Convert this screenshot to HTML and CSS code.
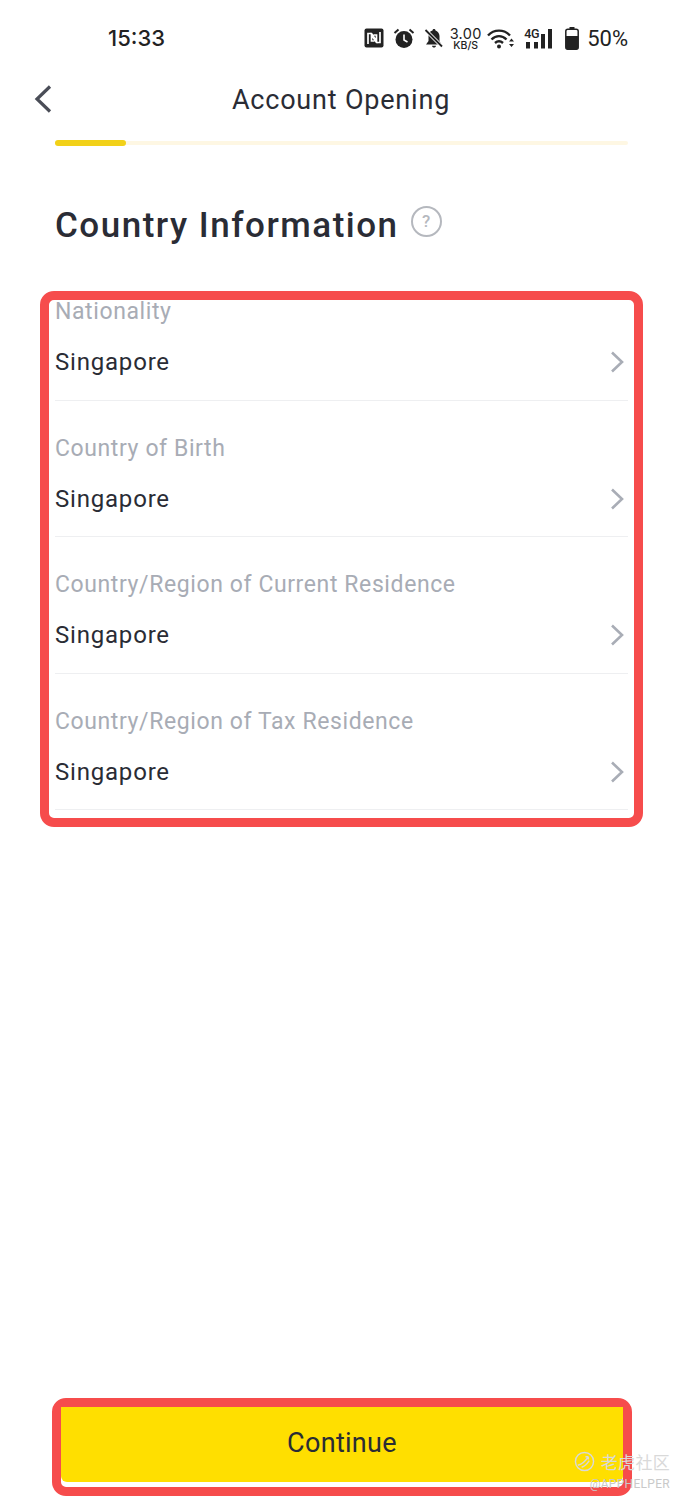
FILE: index.html
```html
<!DOCTYPE html>
<html lang="en">
<head>
<meta charset="utf-8">
<title>Account Opening</title>
<link rel="stylesheet" href="styles.css">
</head>
<body>
<div class="page">
  <header class="status">
    <span class="time">15:33</span>
    <div class="status-icons">
      <svg class="ic-nfc" width="20" height="20" viewBox="0 0 20 20"><rect x="0.500" y="0.500" width="19" height="19" rx="2" fill="#222"/><path d="M4 16V5.500h3.500l5 7.500V7H9.500M16 4v10.500h-3.500L7.500 7v6h3" fill="none" stroke="#fff" stroke-width="1.700"/></svg>
      <svg class="ic-alarm" width="22" height="22" viewBox="0 0 22 22"><circle cx="11" cy="12.500" r="8.500" fill="#222"/><path d="M11 7.500v5.500l3.500 2" fill="none" stroke="#fff" stroke-width="1.600"/><path d="M1.500 6l4-3.500M20.500 6l-4-3.500" stroke="#222" stroke-width="2" fill="none"/></svg>
      <svg class="ic-bell" width="20" height="20" viewBox="0 0 20 20"><path d="M10 1c-1 0-1.500.7-1.500 1.500C5.800 3.300 4.500 5.500 4.500 8v5L2 16.500h15.500L15.500 13V8c0-2.500-2-4.700-4-5.500C11.500 1.700 11 1 10 1zM8 17.700h4c0 1-1 1.800-2 1.800s-2-.8-2-1.800z" fill="#222"/><path d="M1.500 2L18 18.500" stroke="#fff" stroke-width="3.500"/><path d="M1.500 2L18 18.500" stroke="#222" stroke-width="1.800"/></svg>
      <div class="speed"><span class="speed-num">3.00</span><span class="speed-unit">KB/S</span></div>
      <svg class="ic-wifi" width="28" height="21" viewBox="0 0 28 21"><path d="M1 7.500C7 1 17 1 23 7.500M4.500 11.500C9 7 15 7 19.500 11.500M8 15C10.500 12.700 13.500 12.700 16 15" fill="none" stroke="#222" stroke-width="2.400"/><circle cx="12" cy="18.500" r="2" fill="#222"/><path d="M22 13.500l2.500-3 2.500 3zM22 16l2.500 3 2.500-3z" fill="#222"/></svg>
      <div class="net">
        <span class="net-label">4G</span>
        <svg width="28" height="21" viewBox="0 0 28 21"><path d="M2 14h4v6.500H2zM10 14h4v6.500h-4zM17 6h4v14.500h-4zM24 1h4v19.500h-4z" fill="#222"/></svg>
      </div>
      <svg class="ic-batt" width="14" height="23" viewBox="0 0 14 23"><path d="M4.500 0h5v2h-5z" fill="#222"/><rect x="0.800" y="2.200" width="12.400" height="20" rx="2" fill="#fff" stroke="#222" stroke-width="1.500"/><path d="M1 9h12v11.500a2 2 0 0 1-2 2H3a2 2 0 0 1-2-2z" fill="#222"/></svg>
      <span class="pct">50%</span>
    </div>
  </header>

  <nav class="nav">
    <svg class="back" width="20" height="30" viewBox="0 0 20 30"><path d="M17 2.500L4 15l13 12.500" fill="none" stroke="#4a4d57" stroke-width="3.200"/></svg>
    <h1 class="nav-title">Account Opening</h1>
  </nav>

  <div class="progress"><div class="progress-fill"></div></div>

  <div class="heading">
    <h2 class="heading-text">Country Information</h2>
    <span class="help">?</span>
  </div>

  <section class="form">
    <div class="row">
      <div class="label">Nationality</div>
      <div class="value-line"><span class="value">Singapore</span><svg class="chev" width="14" height="22" viewBox="0 0 14 22"><path d="M2 1.500L12 11 2 20.500" fill="none" stroke="#a9adb6" stroke-width="2.600"/></svg></div>
    </div>
    <div class="row">
      <div class="label">Country of Birth</div>
      <div class="value-line"><span class="value">Singapore</span><svg class="chev" width="14" height="22" viewBox="0 0 14 22"><path d="M2 1.500L12 11 2 20.500" fill="none" stroke="#a9adb6" stroke-width="2.600"/></svg></div>
    </div>
    <div class="row">
      <div class="label">Country/Region of Current Residence</div>
      <div class="value-line"><span class="value">Singapore</span><svg class="chev" width="14" height="22" viewBox="0 0 14 22"><path d="M2 1.500L12 11 2 20.500" fill="none" stroke="#a9adb6" stroke-width="2.600"/></svg></div>
    </div>
    <div class="row">
      <div class="label">Country/Region of Tax Residence</div>
      <div class="value-line"><span class="value">Singapore</span><svg class="chev" width="14" height="22" viewBox="0 0 14 22"><path d="M2 1.500L12 11 2 20.500" fill="none" stroke="#a9adb6" stroke-width="2.600"/></svg></div>
    </div>
  </section>

  <div class="cta-frame"><button class="cta">Continue</button></div>

  <div class="watermark">
    <div class="wm-top">
      <svg width="21" height="21" viewBox="0 0 22 22"><circle cx="11" cy="11" r="9.500" fill="none" stroke="#d9d9d9" stroke-width="1.500"/><path d="M4 15c4-1 8-4 11-9M15 6h-3M15 6v3M8 17c3-1 6-4 8-7" fill="none" stroke="#d9d9d9" stroke-width="1.500"/></svg>
      <span class="wm-cn">老虎社区</span>
    </div>
    <div class="wm-en">@APPHELPER</div>
  </div>
</div>
</body>
</html>
```

FILE: styles.css
```css
* { box-sizing: border-box; }
html, body { margin: 0; padding: 0; background: #fff; }
.page {
  position: relative;
  width: 682px;
  height: 1500px;
  display: flex;
  flex-direction: column;
  font-family: Roboto, "Noto Sans", sans-serif;
  color: #2a2c35;
  overflow: hidden;
}
.status {
  height: 76px;
  display: flex;
  align-items: center;
  justify-content: space-between;
  padding: 0 54px 0 108px;
  color: #222;
}
.time { font-size: 22px; font-family: "Inter", Roboto, sans-serif; font-weight: 500; letter-spacing: 0; }
.status-icons { display: flex; align-items: center; }
.ic-nfc { margin-right: 9px; }
.ic-alarm { margin-right: 9px; }
.ic-bell { margin-right: 5px; }
.speed {
  width: 33px;
  margin-right: 5px;
  display: flex;
  flex-direction: column;
  align-items: center;
  font-family: Inter, Roboto, sans-serif;
  line-height: 1;
}
.speed-num { font-size: 14.500px; letter-spacing: 0.3px; height: 13px; line-height: 13px; }
.speed-unit { font-size: 10.500px; font-weight: 500; height: 10px; line-height: 11px; }
.ic-wifi { margin-right: 9px; }
.net { position: relative; width: 28px; height: 21px; margin-right: 13px; }
.net svg { display: block; }
.net-label {
  position: absolute;
  left: 0;
  top: -1px;
  font-size: 12.500px;
  font-weight: 500;
  letter-spacing: -0.3px;
  line-height: 13px;
}
.ic-batt { margin-right: 8px; }
.pct { font-size: 22px; font-family: Roboto, sans-serif; font-weight: 400; letter-spacing: 0; }

.nav {
  position: relative;
  height: 48px;
  display: flex;
  align-items: center;
  justify-content: center;
}
.back { position: absolute; left: 33px; top: 8px; }
.nav-title {
  margin: 0;
  font-size: 27px;
  font-weight: 400;
  letter-spacing: 0.800px;
  color: #2a2c35;
}
.progress {
  margin: 17px 54px 0 55px;
  height: 4px;
  border-radius: 2px;
  background: #fef7e3;
}
.progress-fill {
  width: 71px;
  height: 6px;
  position: relative;
  top: -1px;
  border-radius: 3px;
  background: #f2d118;
}

.heading {
  margin: 54px 0 0 55px;
  height: 52px;
  display: flex;
  align-items: center;
  gap: 12px;
}
.heading-text {
  margin: 0;
  font-size: 35px;
  font-weight: 500;
  letter-spacing: 1.500px;
  color: #2a2c35;
}
.help {
  width: 31px;
  height: 31px;
  margin-top: -8px;
  border: 2.500px solid #b5b8be;
  border-radius: 50%;
  color: #b5b8be;
  font-size: 17px;
  font-weight: 500;
  display: flex;
  align-items: center;
  justify-content: center;
}

.form {
  margin: 40px 39px 0 40px;
  height: 536px;
  border: 9px solid #f64c4c;
  border-radius: 14px;
  padding: 0 6px 0 6px;
}
.row {
  height: 100.500px;
  border-bottom: 1px solid #eeeff1;
  padding-top: 1px;
}
.row + .row { margin-top: 36px; }
.label {
  height: 22px;
  line-height: 22px;
  font-size: 23px;
  letter-spacing: 0.600px;
  color: #a8acb5;
}
.value-line {
  margin-top: 19px;
  height: 40px;
  display: flex;
  align-items: center;
  justify-content: space-between;
  padding-right: 4px;
}
.value { font-size: 24px; font-weight: 400; letter-spacing: 0.800px; color: #2a2c35; }

.cta-frame {
  margin: auto 50px 4px 52px;
  height: 98px;
  border: 9px solid #f64c4c;
  border-radius: 14px;
  background: #fff;
}
.cta {
  display: block;
  width: 100%;
  height: 75px;
  border: 0;
  padding: 0 0 3px;
  background: #ffdf00;
  border-radius: 0 0 6px 6px;
  font-family: Roboto, "Noto Sans", sans-serif;
  font-size: 27px;
  font-weight: 400;
  letter-spacing: 0.300px;
  color: #2a2c35;
}

.watermark {
  position: absolute;
  right: 12px;
  top: 1449px;
  display: flex;
  flex-direction: column;
  align-items: flex-end;
  color: #d9d9d9;
}
.wm-top { display: flex; align-items: center; gap: 6px; height: 24px; }
.wm-cn { font-family: "Noto Sans CJK SC", sans-serif; font-size: 17px; letter-spacing: 0.300px; }
.wm-en { font-size: 12px; letter-spacing: 0.300px; margin-top: 4px; line-height: 14px; color: #c9c9c9; }
```
